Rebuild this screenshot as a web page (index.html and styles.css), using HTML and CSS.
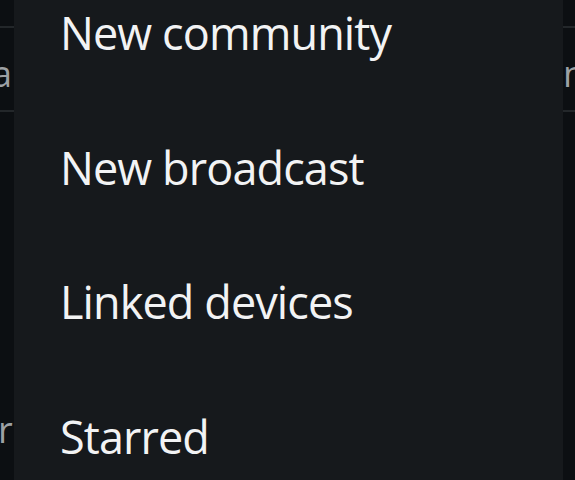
FILE: index.html
```html
<!DOCTYPE html>
<html lang="en">

<head>
    <meta charset="UTF-8">
    <meta name="viewport" content="width=device-width, initial-scale=1.0">
    <title>Menu</title>
    <link rel="stylesheet" href="styles.css">
</head>

<body>
    <div class="screen">
        <div class="search-row">
            <span class="peek">a</span>
            <span class="peek">n</span>
        </div>
        <div class="chat-row">
            <span class="peek">r</span>
        </div>

        <ul class="menu">
            <li>New community</li>
            <li>New broadcast</li>
            <li>Linked devices</li>
            <li>Starred</li>
        </ul>
    </div>
</body>

</html>
```

FILE: styles.css
```css
body {
    margin: 0;
    background: #0c0f12;
    font-family: "Open Sans", "Noto Sans", sans-serif;
    color: #f2f3f4;
    overflow: hidden;
}

.screen {
    position: relative;
    height: 480px;
    overflow: hidden;
}

.search-row {
    margin-top: 26px;
    height: 86px;
    border-top: 2px solid #23272a;
    border-bottom: 2px solid #23272a;
    display: flex;
    justify-content: space-between;
    align-items: flex-end;
    padding-bottom: 18px;
    box-sizing: border-box;
}

.chat-row {
    margin-top: 300px;
    display: flex;
}

.peek {
    font-size: 36px;
    line-height: 1;
    color: #9da1a5;
}

.search-row .peek:first-child {
    margin-left: -8px;
}

.search-row .peek:last-child {
    margin-right: -10px;
}

.chat-row .peek {
    margin-left: -2px;
}

.menu {
    position: absolute;
    top: 0;
    bottom: 0;
    left: 14px;
    right: 12px;
    margin: 0;
    padding: 0 0 0 46px;
    list-style: none;
    background: #16191c;
}

.menu li {
    height: 134.5px;
    font-size: 45px;
    font-weight: 370;
    line-height: 1;
    padding-top: 10px;
    box-sizing: border-box;
    letter-spacing: -0.9px;
}
```
